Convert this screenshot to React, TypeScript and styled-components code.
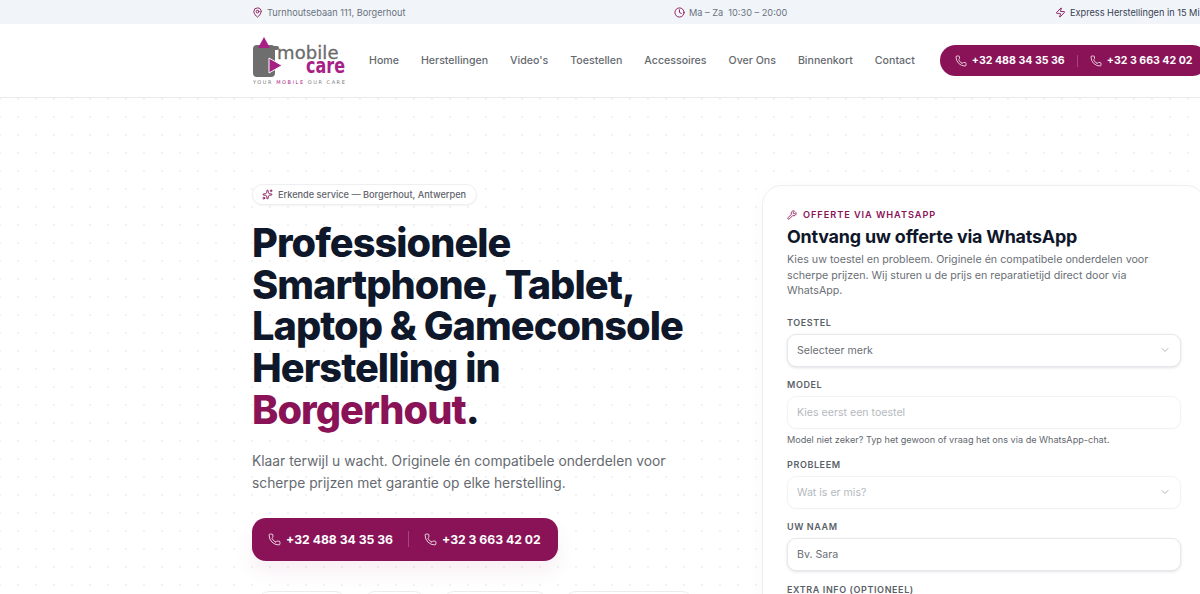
import React from "react";
import styled, { createGlobalStyle } from "styled-components";
import { ChevronDown, Clock, MapPin, Phone, Sparkles, Wrench, Zap } from "lucide-react";

const plum = "#8a1257";

const GlobalStyle = createGlobalStyle`
  html, body {
    margin: 0;
    height: 594px;
    overflow: hidden;
    background: #fff;
    font-family: Inter, "Liberation Sans", sans-serif;
    color: #0f172a;
  }
`;

const TopBar = styled.div`
  height: 24px;
  background: #f1f5f9;
  display: grid;
  grid-template-columns: 422px 381px 1fr;
  padding-left: 252px;
  align-items: center;
  font-size: 9.2px;
  color: #6b7280;
  white-space: nowrap;
  overflow: hidden;
`;

const TopItem = styled.div<{ $dark?: boolean }>`
  display: flex;
  align-items: center;
  gap: 4px;
  color: ${(p) => (p.$dark ? "#374151" : "#6b7280")};

  svg {
    color: ${plum};
    flex: none;
  }
`;

const Header = styled.header`
  height: 73px;
  background: #fff;
  border-bottom: 1px solid #e8eaee;
  box-shadow: 0 1px 2px rgba(15, 23, 42, 0.04);
  display: flex;
  align-items: center;
  padding-left: 252px;
  white-space: nowrap;
`;

const Logo = styled.div`
  width: 93px;
  height: 52px;
  position: relative;
  flex: none;
`;

const LogoMobile = styled.span`
  position: absolute;
  left: 25px;
  top: 9px;
  font: 400 18px/18px "DejaVu Sans", sans-serif;
  letter-spacing: 0.1px;
  -webkit-text-stroke: 0.3px #6b6b6b;
  color: #6b6b6b;
`;

const LogoCare = styled.span`
  position: absolute;
  right: 0;
  top: 26px;
  font: 700 16px/16px "DejaVu Sans", sans-serif;
  color: #a81f86;
  transform: scaleY(1.3);
  transform-origin: right bottom;
`;

const LogoTag = styled.span`
  position: absolute;
  left: 1px;
  top: 44px;
  font: 400 5px/6px "DejaVu Sans", sans-serif;
  letter-spacing: 1.55px;
  color: #777;

  b {
    font-weight: 400;
    color: #a81f86;
  }
`;

const Nav = styled.nav`
  display: flex;
  gap: 22px;
  margin-left: 24px;
  font-size: 10.6px;
  font-weight: 500;
  color: #666a70;
`;

const PhonePill = styled.div`
  margin-left: 25px;
  height: 31px;
  padding: 0 15px;
  border-radius: 16px;
  background: ${plum};
  color: #fff;
  display: flex;
  align-items: center;
  gap: 12px;
  font-size: 10.6px;
  font-weight: 700;
  flex: none;
`;

const PhoneLink = styled.span`
  display: flex;
  align-items: center;
  gap: 5px;
`;

const PhoneDivider = styled.i<{ $tall?: boolean }>`
  width: 1px;
  height: ${(p) => (p.$tall ? 16 : 12)}px;
  background: rgba(255, 255, 255, 0.22);
`;

const Hero = styled.main`
  height: 496px;
  background-color: #fff;
  background-image: radial-gradient(rgba(148, 163, 184, 0.14) 1px, transparent 1.2px);
  background-size: 18px 18px;
  background-position: -9px -8px;
  display: grid;
  grid-template-columns: 510px 444px;
  padding: 87px 0 0 252px;
  overflow: hidden;
`;

const Left = styled.div`
  display: flex;
  flex-direction: column;
  align-items: flex-start;
`;

const Badge = styled.div`
  display: flex;
  align-items: center;
  gap: 5px;
  height: 19px;
  padding: 0 10px 0 9px;
  margin-top: -1px;
  border: 1px solid #eeeff2;
  border-radius: 11px;
  background: #fff;
  box-shadow: 0 1px 2px rgba(15, 23, 42, 0.05);
  font-size: 9.2px;
  font-weight: 500;
  color: #5f636b;

  svg {
    color: ${plum};
  }
`;

const Title = styled.h1`
  margin: 18px 0 0;
  font-size: 39.7px;
  line-height: 41.7px;
  font-weight: 800;
  letter-spacing: -0.95px;
  color: #0f172a;

  em {
    font-style: normal;
    color: ${plum};
  }
`;

const Lead = styled.p`
  margin: 18px 0 0;
  font-size: 13.8px;
  line-height: 22px;
  color: #666a70;
  width: 440px;
`;

const CallButton = styled.div`
  margin-top: 24px;
  height: 43px;
  padding: 0 17px 0 16px;
  border-radius: 14px;
  background: ${plum};
  color: #fff;
  display: flex;
  align-items: center;
  gap: 15px;
  font-size: 12.2px;
  font-weight: 700;
  box-shadow: 0 10px 20px rgba(138, 18, 87, 0.07);
  white-space: nowrap;
`;

const Chips = styled.div`
  display: flex;
  gap: 16px;
  margin: 30px 0 0 5px;
`;

const Chip = styled.div<{ $w: number }>`
  width: ${(p) => p.$w}px;
  height: 24px;
  flex: none;
  border: 1px solid #ececef;
  border-radius: 12px;
  background: #fff;
`;

const Card = styled.section`
  width: 444px;
  height: 600px;
  padding: 23px 24px 0;
  box-sizing: border-box;
  border: 1px solid #eceef1;
  border-radius: 20px;
  background: #fff;
  box-shadow: 0 6px 20px rgba(15, 23, 42, 0.03);
`;

const Eyebrow = styled.div`
  display: flex;
  align-items: center;
  gap: 6px;
  font-size: 9.2px;
  font-weight: 600;
  letter-spacing: 0.95px;
  color: ${plum};
`;

const CardTitle = styled.h2`
  margin: 4px 0 0;
  font-size: 17.9px;
  line-height: 25px;
  font-weight: 700;
  letter-spacing: -0.2px;
  color: #0f172a;
`;

const CardText = styled.p`
  margin: 3px 0 0;
  font-size: 10.7px;
  line-height: 15.5px;
  color: #6b6f76;
`;

const Field = styled.div<{ $first?: boolean }>`
  margin-top: ${(p) => (p.$first ? 18 : 12.5)}px;
`;

const Label = styled.div`
  font-size: 9px;
  line-height: 12px;
  font-weight: 600;
  letter-spacing: 0.6px;
  color: #5a5f68;
  margin-bottom: 5px;
`;

const Control = styled.div<{ $off?: boolean }>`
  height: 33px;
  box-sizing: border-box;
  padding: 0 9px;
  display: flex;
  align-items: center;
  justify-content: space-between;
  border: 1px solid ${(p) => (p.$off ? "#f1f2f4" : "#e6e8ec")};
  border-radius: 9px;
  background: #fff;
  box-shadow: ${(p) => (p.$off ? "0 1px 2px rgba(15,23,42,0.02)" : "0 1px 3px rgba(15,23,42,0.12)")};
  font-size: 10.6px;
  color: ${(p) => (p.$off ? "#b5b9c0" : "#6b6f76")};

  svg {
    color: #b0b5bd;
  }
`;

const Hint = styled.div`
  margin-top: 5px;
  font-size: 9.15px;
  line-height: 12px;
  color: #63676e;
`;

function Phones({ size, tall }: { size: number; tall?: boolean }) {
  return (
    <>
      <PhoneLink>
        <Phone size={size} strokeWidth={1.5} />
        +32 488 34 35 36
      </PhoneLink>
      <PhoneDivider $tall={tall} />
      <PhoneLink>
        <Phone size={size} strokeWidth={1.5} />
        +32 3 663 42 02
      </PhoneLink>
    </>
  );
}

export default function App() {
  return (
    <>
      <GlobalStyle />
      <TopBar>
        <TopItem>
          <MapPin size={11} />
          Turnhoutsebaan 111, Borgerhout
        </TopItem>
        <TopItem>
          <Clock size={11} />
          Ma – Za&nbsp; 10:30 – 20:00
        </TopItem>
        <TopItem $dark>
          <Zap size={11} />
          Express Herstellingen in 15 Minuten
        </TopItem>
      </TopBar>
      <Header>
        <Logo>
          <svg width="34" height="42" viewBox="0 0 34 42">
            <rect x="1" y="10" width="22" height="32" rx="4" fill="#6e6e6e" />
            <rect x="20" y="11" width="7" height="4" rx="2" fill="#6e6e6e" />
            <path d="M6 13 L12 2 L18 13 Z" fill="#a81f86" />
            <path d="M17 23 L17 38 L30 30.5 Z" fill="#a81f86" stroke="#fff" strokeWidth="1" />
          </svg>
          <LogoMobile>mobile</LogoMobile>
          <LogoCare>care</LogoCare>
          <LogoTag>
            YOUR <b>MOBILE</b> OUR CARE
          </LogoTag>
        </Logo>
        <Nav>
          <span>Home</span>
          <span>Herstellingen</span>
          <span>Video's</span>
          <span>Toestellen</span>
          <span>Accessoires</span>
          <span>Over Ons</span>
          <span>Binnenkort</span>
          <span>Contact</span>
        </Nav>
        <PhonePill>
          <Phones size={12} />
        </PhonePill>
      </Header>
      <Hero>
        <Left>
          <Badge>
            <Sparkles size={11} />
            Erkende service — Borgerhout, Antwerpen
          </Badge>
          <Title>
            Professionele
            <br />
            Smartphone, Tablet,
            <br />
            Laptop &amp; Gameconsole
            <br />
            Herstelling in
            <br />
            <em>Borgerhout</em>.
          </Title>
          <Lead>
            Klaar terwijl u wacht. Originele én compatibele onderdelen voor scherpe prijzen met
            garantie op elke herstelling.
          </Lead>
          <CallButton>
            <Phones size={13} tall />
          </CallButton>
          <Chips>
            <Chip $w={88} />
            <Chip $w={61} />
            <Chip $w={104} />
            <Chip $w={128} />
          </Chips>
        </Left>
        <Card>
          <Eyebrow>
            <Wrench size={10} />
            OFFERTE VIA WHATSAPP
          </Eyebrow>
          <CardTitle>Ontvang uw offerte via WhatsApp</CardTitle>
          <CardText>
            Kies uw toestel en probleem. Originele én compatibele onderdelen voor scherpe prijzen.
            Wij sturen u de prijs en reparatietijd direct door via WhatsApp.
          </CardText>
          <Field $first>
            <Label>TOESTEL</Label>
            <Control>
              Selecteer merk
              <ChevronDown size={12} />
            </Control>
          </Field>
          <Field>
            <Label>MODEL</Label>
            <Control $off>Kies eerst een toestel</Control>
            <Hint>Model niet zeker? Typ het gewoon of vraag het ons via de WhatsApp-chat.</Hint>
          </Field>
          <Field>
            <Label>PROBLEEM</Label>
            <Control $off>
              Wat is er mis?
              <ChevronDown size={12} />
            </Control>
          </Field>
          <Field>
            <Label>UW NAAM</Label>
            <Control>Bv. Sara</Control>
          </Field>
          <Field>
            <Label>EXTRA INFO (OPTIONEEL)</Label>
          </Field>
        </Card>
      </Hero>
    </>
  );
}
